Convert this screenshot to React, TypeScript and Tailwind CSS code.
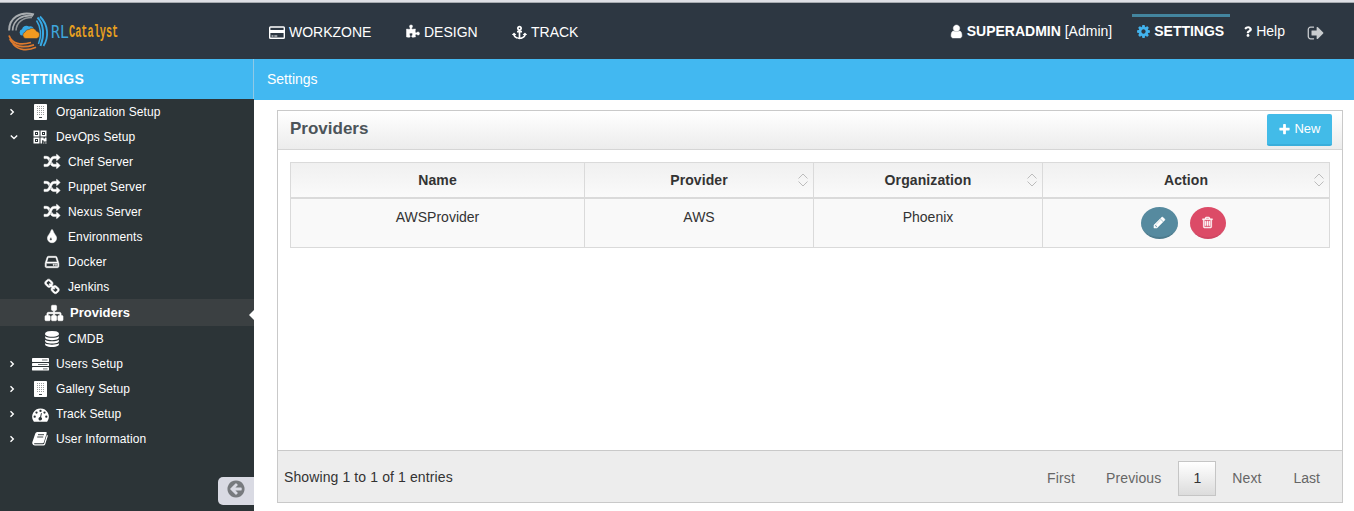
import React from "react";
import { FaAnchor, FaQuestion } from "react-icons/fa";

const PATHS = {
  plus: "M1600 736v192q0 40-28 68t-68 28h-416v416q0 40-28 68t-68 28h-192q-40 0-68-28t-28-68v-416h-416q-40 0-68-28t-28-68v-192q0-40 28-68t68-28h416v-416q0-40 28-68t68-28h192q40 0 68 28t28 68v416h416q40 0 68 28t28 68z",
  pencil: "M491 1536l91-91-235-235-91 91v107h128v128h107zm523-928q0-22-22-22-10 0-17 7l-542 542q-7 7-7 17 0 22 22 22 10 0 17-7l542-542q7-7 7-17zm-54-192l416 416-832 832h-416v-416zm683 96q0 53-37 90l-166 166-416-416 166-165q36-38 90-38 53 0 91 38l235 234q37 39 37 91z",
  trash: "M704 736v576q0 14-9 23t-23 9h-64q-14 0-23-9t-9-23v-576q0-14 9-23t23-9h64q14 0 23 9t9 23zm256 0v576q0 14-9 23t-23 9h-64q-14 0-23-9t-9-23v-576q0-14 9-23t23-9h64q14 0 23 9t9 23zm256 0v576q0 14-9 23t-23 9h-64q-14 0-23-9t-9-23v-576q0-14 9-23t23-9h64q14 0 23 9t9 23zm128 724v-948h-896v948q0 22 7 40.5t14.5 27 10.5 8.5h832q3 0 10.5-8.5t14.5-27 7-40.5zm-672-1076h448l-48-117q-7-9-17-11h-317q-10 2-17 11zm928 32v64q0 14-9 23t-23 9h-96v948q0 83-47 143.5t-113 60.5h-832q-66 0-113-58.5t-47-141.5v-952h-96q-14 0-23-9t-9-23v-64q0-14 9-23t23-9h309l70-167q15-37 54-63t79-26h320q40 0 79 26t54 63l70 167h309q14 0 23 9t9 23z",
  user: "M1536 1399q0 109-62.5 187t-150.5 78h-854q-88 0-150.5-78t-62.5-187q0-85 8.5-160.5t31.5-152 58.5-131 94-89 134.5-34.5q131 128 313 128t313-128q76 0 134.5 34.5t94 89 58.5 131 31.5 152 8.5 160.5zm-256-887q0 159-112.5 271.5t-271.5 112.5-271.5-112.5-112.5-271.5 112.5-271.5 271.5-112.5 271.5 112.5 112.5 271.5z",
  cog: "M1152 896q0-106-75-181t-181-75-181 75-75 181 75 181 181 75 181-75 75-181zm512-109v222q0 12-8 23t-20 13l-185 28q-19 54-39 91 35 50 107 138 10 12 10 25t-9 23q-27 37-99 108t-94 71q-12 0-26-9l-138-108q-44 23-91 38-16 136-29 186-7 28-36 28h-222q-14 0-24.5-8.5t-11.5-21.5l-28-184q-49-16-90-37l-141 107q-10 9-25 9-14 0-25-11-126-114-165-168-7-10-7-23 0-12 8-23 15-21 51-66.5t54-70.5q-27-50-41-99l-183-27q-13-2-21-12.5t-8-23.5v-222q0-12 8-23t19-13l186-28q14-46 39-92-40-57-107-138-10-12-10-24 0-10 9-23 26-36 98.5-107.5t94.5-71.5q13 0 26 10l138 107q44-23 91-38 16-136 29-186 7-28 36-28h222q14 0 24.5 8.5t11.5 21.5l28 184q49 16 90 37l142-107q9-9 24-9 13 0 25 10 129 119 165 170 7 8 7 22 0 12-8 23-15 21-51 66.5t-54 70.5q26 50 41 98l183 28q13 2 21 12.5t8 23.5z",
  signOut: "M704 1440q0 4 1 20t.5 26.5-3 23.5-10 19.5-20.5 6.5h-320q-119 0-203.5-84.5t-84.5-203.5v-704q0-119 84.5-203.5t203.5-84.5h320q13 0 22.5 9.5t9.5 22.5q0 4 1 20t.5 26.5-3 23.5-10 19.5-20.5 6.5h-320q-66 0-113 47t-47 113v704q0 66 47 113t113 47h312l11.5 1 11.5 3 8 5.5 7 9 2 13.5zm928-544q0 26-19 45l-544 544q-19 19-45 19t-45-19-19-45v-288h-448q-26 0-45-19t-19-45v-384q0-26 19-45t45-19h448v-288q0-26 19-45t45-19 45 19l544 544q19 19 19 45z",
  database: "M896 768q237 0 443-43t325-127v170q0 69-103 128t-280 93.5-385 34.5-385-34.5-280-93.5-103-128v-170q119 84 325 127t443 43zm0 768q237 0 443-43t325-127v170q0 69-103 128t-280 93.5-385 34.5-385-34.5-280-93.5-103-128v-170q119 84 325 127t443 43zm0-384q237 0 443-43t325-127v170q0 69-103 128t-280 93.5-385 34.5-385-34.5-280-93.5-103-128v-170q119 84 325 127t443 43zm0-1152q208 0 385 34.5t280 93.5 103 128v128q0 69-103 128t-280 93.5-385 34.5-385-34.5-280-93.5-103-128v-128q0-69 103-128t280-93.5 385-34.5z",
  sitemap: "M1792 1248v320q0 40-28 68t-68 28h-320q-40 0-68-28t-28-68v-320q0-40 28-68t68-28h96v-192h-512v192h96q40 0 68 28t28 68v320q0 40-28 68t-68 28h-320q-40 0-68-28t-28-68v-320q0-40 28-68t68-28h96v-192h-512v192h96q40 0 68 28t28 68v320q0 40-28 68t-68 28h-320q-40 0-68-28t-28-68v-320q0-40 28-68t68-28h96v-192q0-52 38-90t90-38h512v-192h-96q-40 0-68-28t-28-68v-320q0-40 28-68t68-28h320q40 0 68 28t28 68v320q0 40-28 68t-68 28h-96v192h512q52 0 90 38t38 90v192h96q40 0 68 28t28 68z",
  random: "M666 481q-60 92-137 273-22-45-37-72.5t-40.5-63.5-51-56.5-63-35-81.5-14.5h-224q-14 0-23-9t-9-23v-192q0-14 9-23t23-9h224q250 0 410 225zm1126 799q0 14-9 23l-320 320q-9 9-23 9-13 0-22.5-9.5t-9.5-22.5v-192q-32 0-85 .5t-81 1-73-1-71-5-64-10.5-63-18.5-58-28.5-59-40-55-53.5-56-69.5q59-93 136-273 22 45 37 72.5t40.5 63.5 51 56.5 63 35 81.5 14.5h256v-192q0-14 9-23t23-9q12 0 24 10l319 319q9 9 9 23zm0-896q0 14-9 23l-320 320q-9 9-23 9-13 0-22.5-9.5t-9.5-22.5v-192h-256q-48 0-87 15t-69 45-51 61.5-45 77.5q-32 62-78 171-29 66-49.5 111t-54 105-64 100-74 83-90 68.5-106.5 42-128 16.5h-224q-14 0-23-9t-9-23v-192q0-14 9-23t23-9h224q48 0 87-15t69-45 51-61.5 45-77.5q32-62 78-171 29-66 49.5-111t54-105 64-100 74-83 90-68.5 106.5-42 128-16.5h256v-192q0-14 9-23t23-9q12 0 24 10l319 319q9 9 9 23z",
  tint: "M896 1152q0-36-20-69-1-1-15.5-22.5t-25.5-38-25-44-21-50.5q-4-16-21-16t-21 16q-7 23-21 50.5t-25 44-25.5 38-15.5 22.5q-20 33-20 69 0 53 37.5 90.5t90.5 37.5 90.5-37.5 37.5-90.5zm512-128q0 212-150 362t-362 150-362-150-150-362q0-145 81-275 6-9 62.5-90.5t101-151 99.5-178 83-201.5q9-30 34-47t51-17 51.5 17 33.5 47q28 93 83 201.5t99.5 178 101 151 62.5 90.5q81 127 81 275z",
  hdd: "M1168 1216q0 33-23.5 56.5t-56.5 23.5-56.5-23.5-23.5-56.5 23.5-56.5 56.5-23.5 56.5 23.5 23.5 56.5zm256 0q0 33-23.5 56.5t-56.5 23.5-56.5-23.5-23.5-56.5 23.5-56.5 56.5-23.5 56.5 23.5 23.5 56.5zm112 160v-320q0-13-9.5-22.5t-22.5-9.5h-1216q-13 0-22.5 9.5t-9.5 22.5v320q0 13 9.5 22.5t22.5 9.5h1216q13 0 22.5-9.5t9.5-22.5zm-1230-480h1180l-157-482q-4-13-16-21.5t-26-8.5h-782q-14 0-26 8.5t-16 21.5zm1358 160v320q0 66-47 113t-113 47h-1216q-66 0-113-47t-47-113v-320q0-25 16-75l197-606q17-53 63-86t101-33h782q55 0 101 33t63 86l197 606q16 50 16 75z",
  arrowLeft: "M1408 960v-128q0-26-19-45t-45-19h-502l189-189q19-19 19-45t-19-45l-91-91q-18-18-45-18t-45 18l-362 362-91 91q-18 18-18 45t18 45l91 91 362 362q18 18 45 18t45-18l91-91q18-18 18-45t-18-45l-189-189h502q26 0 45-19t19-45zm256-64q0 209-103 385.5t-279.5 279.5-385.5 103-385.5-103-279.5-279.5-103-385.5 103-385.5 279.5-279.5 385.5-103 385.5 103 279.5 279.5 103 385.5z",
  puzzle: "M1728 1098q0 81-44.5 135t-123.5 54q-41 0-77.5-17.5t-59-38-56.5-38-71-17.5q-110 0-110 124 0 39 16 115t15 115v5q-22 0-33 1-34 3-97.5 11.5t-115.5 13.5-98 5q-61 0-103-26.5t-42-83.5q0-37 17.5-71t38-56.5 38-59 17.5-77.5q0-79-54-123.5t-135-44.5q-84 0-143 45.5t-59 127.5q0 43 15 83t33.5 64.5 33.5 53 15 50.5q0 45-46 89-37 35-117 35-95 0-245-24-9-2-27.5-4t-27.5-4l-13-2q-1 0-3-1-2 0-2-1v-1024q2 1 17.5 3.5t34 5 21.5 3.5q150 24 245 24 80 0 117-35 46-44 46-89 0-22-15-50.5t-33.5-53-33.5-64.5-15-83q0-82 59-127.5t144-45.5q80 0 134 44.5t54 123.5q0 41-17.5 77.5t-38 59-38 56.5-17.5 71q0 57 42 83.5t103 26.5q64 0 180-15t163-17v2q-1 2-3.5 17.5t-5 34-3.5 21.5q-24 150-24 245 0 80 35 117 44 46 89 46 22 0 50.5-15t53-33.5 64.5-33.5 83-15q82 0 127.5 59t45.5 143z",
  link: "M1520 1216q0-40-28-68l-208-208q-28-28-68-28-42 0-72 32 3 3 19 18.5t21.5 21.5 15 19 13 25.5 3.5 27.5q0 40-28 68t-68 28q-15 0-27.5-3.5t-25.5-13-19-15-21.5-21.5-18.5-19q-33 31-33 73 0 40 28 68l206 207q27 27 68 27 40 0 68-26l147-146q28-28 28-67zm-703-705q0-40-28-68l-206-207q-28-28-68-28-39 0-68 27l-147 146q-28 28-28 67 0 40 28 68l208 208q27 27 68 27 42 0 72-31-3-3-19-18.5t-21.5-21.5-15-19-13-25.5-3.5-27.5q0-40 28-68t68-28q15 0 27.5 3.5t25.5 13 19 15 21.5 21.5 18.5 19q33-31 33-73zm895 705q0 120-85 203l-147 146q-83 83-203 83-121 0-204-85l-206-207q-83-83-83-203 0-123 88-209l-88-88q-86 88-208 88-120 0-204-84l-208-208q-84-84-84-204t85-203l147-146q83-83 203-83 121 0 204 85l206 207q83 83 83 203 0 123-88 209l88 88q86-88 208-88 120 0 204 84l208 208q84 84 84 204z",
};

type IconName = keyof typeof PATHS;

function Icon({ name, className, bold }: { name: IconName; className: string; bold?: boolean }) {
  return (
    <svg
      viewBox="0 0 1792 1792"
      fill="currentColor"
      stroke={bold ? "currentColor" : "none"}
      strokeWidth={bold ? 60 : 0}
      className={`shrink-0 overflow-visible ${className}`}
    >
      <path d={PATHS[name]} />
    </svg>
  );
}

function BuildingIcon() {
  const dots: [number, number][] = [];
  for (let r = 0; r < 5; r++) for (let c = 0; c < 4; c++) dots.push([3 + c * 2, 2 + r * 2]);
  return (
    <svg viewBox="0 0 13 16" className="mr-px h-4 w-[13px]">
      <rect x="0" y="0" width="13" height="16" rx="0.8" fill="#fff" />
      {dots.map(([x, y], i) => (
        <rect key={i} x={x} y={y} width="1" height="1" fill="#9a9d9d" />
      ))}
      <rect x="5" y="13" width="3" height="1" fill="#3c4447" />
    </svg>
  );
}

function QrIcon() {
  return (
    <svg viewBox="0 0 14 14" className="mr-px h-[14px] w-[14px]" fill="#fff" fillRule="evenodd">
      <path d="M0.5 0.5h6v6h-6zM2 2v3h3v-3zM3 3h1v1h-1zM7.5 0.5h6v6h-6zM9 2v3h3v-3zM10 3h1v1h-1zM0.5 7.5h6v6h-6zM2 9v3h3v-3zM3 10h1v1h-1zM7.5 7.5h3v1h1.5v-1h1.5v4h-3v-1.2h-1.4v3.2h-1.6zM10.3 12.4h1v1.1h-1zM12.3 12.4h1.2v1.1h-1.2z" />
    </svg>
  );
}

function ServerIcon() {
  return (
    <svg viewBox="0 0 17 14" className="h-[14px] w-[17px]">
      <g fill="#fff">
        <rect x="0" y="1" width="17" height="4" rx="0.4" />
        <rect x="0" y="6" width="17" height="3" rx="0.4" />
        <rect x="0" y="10" width="17" height="3.5" rx="0.4" />
      </g>
      <g fill="#6b7173">
        <rect x="10" y="2.5" width="5.5" height="1" />
        <rect x="6" y="7" width="9.5" height="1" />
        <rect x="11" y="11.4" width="4.5" height="1" />
      </g>
    </svg>
  );
}

function GaugeIcon() {
  return (
    <svg viewBox="0 0 17 14" className="mt-0.5 h-[14px] w-[17px]">
      <path d="M8.5 0.4A8.3 8.3 0 0 0 1.6 13.3q.3.5.8.5h12.2q.5 0 .8-.5A8.3 8.3 0 0 0 8.5 .4z" fill="#fff" />
      <g fill="#2c3437">
        <circle cx="2.7" cy="8.7" r="1.15" />
        <circle cx="4.5" cy="4.6" r="1.15" />
        <circle cx="8.5" cy="2.9" r="1.15" />
        <circle cx="12.5" cy="4.6" r="1.15" />
        <circle cx="14.3" cy="8.7" r="1.15" />
        <path d="M9 5l.9.3-.8 3.9a1.8 1.8 0 1 1-1-.2z" />
      </g>
    </svg>
  );
}

function BookIcon() {
  return (
    <svg viewBox="0 0 16 14" className="mr-px h-[15px] w-4">
      <path d="M5.2 .4h8.7q1.2 0 .8 1.3l-2.8 9q-.3 1-1.4 1H2.7q-.9 0-.6.6.2.5 1.1.5h7.9q.8 0 1.1-.8L14.9 3.2q1.2.4.8 1.5l-2.5 8q-.4 1.2-1.7 1.2H2.8Q.9 13.9.4 12.2q-.3-.9 0-1.7L3.3 2q.5-1.6 1.9-1.6z" fill="#fff" />
      <path d="M6 3.2h6M5.2 5.5h6" stroke="#2c3437" strokeWidth="0.9" />
    </svg>
  );
}

function CardIcon() {
  return (
    <svg viewBox="0 0 16 13" className="h-[13px] w-4">
      <rect x="0.7" y="1" width="14.6" height="11.3" rx="0.8" fill="none" stroke="#fff" strokeWidth="1.4" />
      <path d="M1 4h14v3H1z" fill="#fff" />
      <path d="M2.5 10h2M5.3 10h3" stroke="#fff" strokeWidth="1" />
    </svg>
  );
}

function Logo() {
  return (
    <div className="flex h-11 items-start">
      <svg viewBox="0 0 43 44" className="h-11 w-[43px] shrink-0">
        <g fill="none" transform="translate(1 0)">
          <path d="M1.1 20.5C1.2 8 12 .8 26 4.5" stroke="#a9adb0" strokeWidth="2" />
          <path d="M4.6 20.5C5 10 14 4.3 25 5.8" stroke="#a9adb0" strokeWidth="1.7" />
          <path d="M8 20.5C8.5 12 15 7.5 24 7.5" stroke="#8f9599" strokeWidth="1.6" />
          <path d="M29.5 7.5C36 14 36.5 26 32.5 36" stroke="#38a9e4" strokeWidth="2" />
          <path d="M28.5 10.5C33.5 18 33 27 30.5 34" stroke="#38a9e4" strokeWidth="1.5" />
          <path d="M32 6.5C40.5 15 41 27 35.5 36" stroke="#38a9e4" strokeWidth="1.8" />
          <path d="M1 25.5C4 34 13 35.5 23 32.5" stroke="#de7a2d" strokeWidth="1.8" />
          <path d="M1.8 29C6 37.5 16 38 26 34.8" stroke="#de7a2d" strokeWidth="1.8" />
          <path d="M5 34C11 40.8 20 41 28 37.3" stroke="#de7a2d" strokeWidth="1.8" />
        </g>
        <path d="M15 25.5a3.2 3.2 0 0 1 0-6.2 4.5 4.5 0 0 1 7-2.8 4.2 4.2 0 0 1 5 2.8v6z" fill="#38a9e4" />
        <path d="M18.8 28.5a3.3 3.3 0 0 1-.8-6.4 4 4 0 0 1 4.2-2.6 4.5 4.5 0 0 1 7.3 1.7 3.7 3.7 0 0 1 0 7.3z" fill="#f19a20" stroke="#2d3742" strokeWidth="0.5" />
      </svg>
      <div className="mt-3 flex whitespace-nowrap text-[18px] leading-5">
        <div className="ml-[1px] w-[18px] shrink-0">
          <div className="w-[22px] origin-left scale-x-[0.82] font-['DejaVu_Sans_Mono',monospace] text-[#3fa6dc]">RL</div>
        </div>
        <div className="w-[50px] shrink-0">
          <div className="w-[88px] origin-left scale-x-[0.57] font-['Liberation_Mono',monospace] font-bold text-[#e9a11f]">Catalyst</div>
        </div>
      </div>
    </div>
  );
}

function Chevron({ open }: { open?: boolean }) {
  return (
    <svg viewBox="0 0 8 8" className={open ? "ml-0.5 -mr-0.5 h-2 w-2" : "h-2 w-2"} fill="none" stroke="#fff" strokeWidth="1.4">
      <path d={open ? "M0.8 2.5l3.2 3 3.2-3" : "M2.5 1.2L5.3 4 2.5 6.8"} />
    </svg>
  );
}

function GroupRow({ icon, label, open }: { icon: React.ReactNode; label: string; open?: boolean }) {
  return (
    <li className="flex h-[25px] items-center pl-2">
      <Chevron open={open} />
      <span className="ml-4 mr-[7px] flex w-[17px] items-center justify-center">{icon}</span>
      <span className="whitespace-nowrap tracking-[0.1px]">{label}</span>
    </li>
  );
}

function ItemRow({ icon, label }: { icon: IconName; label: string }) {
  return (
    <li className="flex h-[25px] items-center pl-11">
      <span className="mr-[7px] flex w-[17px] items-center justify-center">
        <Icon name={icon} className="mr-px mt-px size-4" bold={icon !== "database"} />
      </span>
      <span className="whitespace-nowrap tracking-[0.1px]">{label}</span>
    </li>
  );
}

function Sidebar() {
  return (
    <aside className="flex w-[254px] shrink-0 flex-col bg-[#2c3437] text-white">
      <div className="flex h-10 items-center border-r border-[#8fc9e6] bg-[#42b8f1] pl-[11px] text-sm font-bold tracking-[0.4px]">SETTINGS</div>
      <ul className="text-xs">
        <GroupRow icon={<BuildingIcon />} label="Organization Setup" />
        <GroupRow icon={<QrIcon />} label="DevOps Setup" open />
        <ItemRow icon="random" label="Chef Server" />
        <ItemRow icon="random" label="Puppet Server" />
        <ItemRow icon="random" label="Nexus Server" />
        <ItemRow icon="tint" label="Environments" />
        <ItemRow icon="hdd" label="Docker" />
        <ItemRow icon="link" label="Jenkins" />
        <li className="flex h-[27px] items-center bg-[#3b4042] pl-[45px] text-[13px] font-bold">
          <Icon name="sitemap" className="mr-[7px] size-[18px]" bold />
          <span>Providers</span>
          <svg viewBox="0 0 5 10" className="ml-auto mt-1 h-2.5 w-[5px]" fill="#fff">
            <path d="M5 0v10L0 5z" />
          </svg>
        </li>
        <ItemRow icon="database" label="CMDB" />
        <GroupRow icon={<ServerIcon />} label="Users Setup" />
        <GroupRow icon={<BuildingIcon />} label="Gallery Setup" />
        <GroupRow icon={<GaugeIcon />} label="Track Setup" />
        <GroupRow icon={<BookIcon />} label="User Information" />
      </ul>
      <button className="mt-auto mb-1.5 ml-auto flex h-7 w-9 items-center rounded-l-[5px] bg-[#d9dae3] pl-2 pb-1 text-[#777a7e]">
        <Icon name="arrowLeft" className="size-5" />
      </button>
    </aside>
  );
}

function Header() {
  return (
    <header className="flex h-[59px] shrink-0 border-t-2 border-[#dedfe5] bg-[#2d3742] text-sm text-white">
      <div className="flex w-full border-t border-[#a7abb0]">
        <div className="w-[261px] shrink-0 pl-[7px] pt-[7px]">
          <Logo />
        </div>
        <nav className="flex h-14 items-center pl-2 pb-px pt-[3px]">
          <a className="flex w-[137px] items-center gap-1"><CardIcon />WORKZONE</a>
          <a className="flex w-[106px] items-center gap-1"><Icon name="puzzle" className="size-[14px]" bold />DESIGN</a>
          <a className="flex items-center gap-1"><FaAnchor className="size-[15px]" />TRACK</a>
        </nav>
        <div className="ml-auto flex h-14 pr-[29px]">
          <div className="flex items-center gap-[3px] pr-5">
            <Icon name="user" className="size-[15px]" bold />
            <span><b>SUPERADMIN</b> [Admin]</span>
          </div>
          <div className="flex w-[98px] flex-col pt-[11px]">
            <div className="h-[3px] bg-[#43859f]" />
            <div className="flex h-7 items-center gap-[3px] pl-1 font-bold">
              <Icon name="cog" className="size-[15px] text-[#42b3ee]" />
              SETTINGS
            </div>
          </div>
          <div className="flex items-center pl-[14px]">
            <FaQuestion className="mr-1 h-[11px] w-2" />
            Help
          </div>
          <div className="flex items-center pl-[22px] pt-1 text-[#c9cccf]">
            <Icon name="signOut" className="size-[18px]" />
          </div>
        </div>
      </div>
    </header>
  );
}

function HeadCell({ label, sortable, className }: { label: string; sortable?: boolean; className: string }) {
  return (
    <div className={`flex h-full items-center border-r border-[#dadada] ${className}`}>
      <span className={sortable ? "flex-1 pl-[15px] text-center tracking-[0.1px]" : "flex-1 text-center tracking-[0.1px]"}>{label}</span>
      {sortable && (
        <svg viewBox="0 0 10 14" className="mr-[5px] h-[14px] w-2.5" fill="none" stroke="#bcbcbc">
          <path d="M0.5 5.5L5 1l4.5 4.5M0.5 8.5L5 13l4.5-4.5" />
        </svg>
      )}
    </div>
  );
}

function ProvidersTable() {
  return (
    <div className="mx-3 mt-3 border border-r-0 border-[#dadada] text-sm text-[#333]">
      <div className="flex h-[34px] bg-linear-to-b from-[#f0f0f0] to-[#fafafa] font-bold">
        <HeadCell label="Name" className="w-[294px]" />
        <HeadCell label="Provider" sortable className="w-[229px]" />
        <HeadCell label="Organization" sortable className="w-[229px]" />
        <HeadCell label="Action" sortable className="flex-1" />
      </div>
      <div className="flex h-[50px] border-t-2 border-[#dadada] bg-[#f9f9f9] text-center">
        <div className="w-[294px] border-r border-[#dadada] pt-2">AWSProvider</div>
        <div className="w-[229px] border-r border-[#dadada] pt-2">AWS</div>
        <div className="w-[229px] border-r border-[#dadada] pt-2">Phoenix</div>
        <div className="flex flex-1 justify-center gap-3 border-r border-[#dadada] pr-1.5 pt-2 text-white">
          <button className="flex h-8 w-[37px] items-center justify-center rounded-[50%] border-b-2 border-[#4d7b8d] bg-[#568a9f]">
            <Icon name="pencil" className="size-[13px]" bold />
          </button>
          <button className="flex h-8 w-9 items-center justify-center rounded-[50%] border-b-2 border-[#cf4662] bg-[#dc4b67]">
            <Icon name="trash" className="size-[13px]" bold />
          </button>
        </div>
      </div>
    </div>
  );
}

export default function App() {
  return (
    <div className="flex h-[511px] w-[1354px] flex-col overflow-hidden bg-white font-['Liberation_Sans',Arial,sans-serif]">
      <Header />
      <div className="flex min-h-0 flex-1">
        <Sidebar />
        <main className="flex min-w-0 flex-1 flex-col">
          <div className="flex h-[41px] shrink-0 items-center bg-[#42b8f1] pb-px pl-[13px] text-sm text-white">Settings</div>
          <section className="ml-[23px] mr-[11px] mt-2.5 flex h-[393px] flex-col border border-[#c9c9c9]">
            <div className="flex h-[39px] shrink-0 items-start justify-between border-b border-[#d5d5d5] bg-linear-to-b from-white to-[#ececec] pl-3 pr-2.5">
              <h2 className="pt-[6px] text-[17px] font-bold leading-6 text-[#4c5459]">Providers</h2>
              <button className="mt-[3px] flex h-8 w-[65px] items-center justify-center gap-[3px] rounded-xs border-b-2 border-[#3aaedb] bg-[#42bbe8] text-[13px] text-white">
                <Icon name="plus" className="size-[13px]" />
                New
              </button>
            </div>
            <ProvidersTable />
            <footer className="mt-auto flex h-[52px] shrink-0 items-center justify-between border-t border-[#c9c9c9] bg-[#ededed] pl-1.5 text-sm text-[#333]">
              <span className="tracking-[0.11px]">Showing 1 to 1 of 1 entries</span>
              <div className="flex items-center pr-[5px] pt-1 text-[#666]">
                <span className="px-4 pb-0.5 tracking-[0.15px]">First</span>
                <span className="pl-[15px] pr-[17px] pb-0.5 tracking-[0.1px]">Previous</span>
                <span className="flex h-[35px] w-[38px] items-center justify-center border border-[#c5c5c5] bg-linear-to-b from-white to-[#dcdcdc] pb-px text-[#333]">1</span>
                <span className="px-4 pb-0.5 tracking-[0.1px]">Next</span>
                <span className="pl-4 pr-[17px] pb-0.5">Last</span>
              </div>
            </footer>
          </section>
        </main>
      </div>
    </div>
  );
}
